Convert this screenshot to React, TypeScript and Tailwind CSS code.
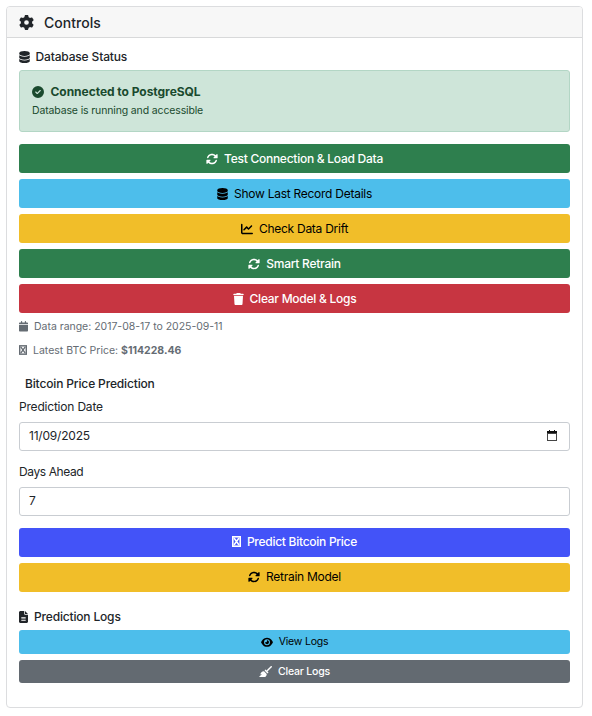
import type { ReactNode } from 'react';
import {
  FaBroom,
  FaCalendar,
  FaChartLine,
  FaCircleCheck,
  FaDatabase,
  FaEye,
  FaFileLines,
  FaGear,
  FaRotate,
  FaTrash,
} from 'react-icons/fa6';

function MissingGlyph({ className }: { className: string }) {
  return (
    <svg viewBox="0 0 9 11" className={className} fill="none" stroke="currentColor">
      <rect x="0.8" y="0.8" width="7.4" height="9.4" strokeWidth="1.6" />
      <path d="M2 2l5 7M7 2L2 9" strokeWidth="1.5" />
    </svg>
  );
}

function ActionButton({ className, children }: { className: string; children: ReactNode }) {
  return (
    <button
      type="button"
      className={`flex w-full shrink-0 items-center justify-center rounded-[3px] ${className}`}
    >
      {children}
    </button>
  );
}

export default function App() {
  return (
    <div className="h-[716px] w-[592px] bg-white pl-1.5 pt-1.5 font-['Inter','Liberation_Sans',sans-serif] text-xs text-[#212529]">
      <section className="h-[702px] w-[577px] overflow-hidden rounded-[4px] border border-[#dcdddf] bg-white">
        <header className="flex h-[31px] items-center border-b border-[#d8d9da] bg-[#f7f7f7] pl-3">
          <FaGear className="size-[15px]" />
          <h1 className="ml-[10px] text-[14px] font-medium leading-[17px] tracking-[0.04px]">Controls</h1>
        </header>

        <div className="flex flex-col px-3 pt-[11px]">
          <h2 className="flex h-[15px] items-center font-medium tracking-[-0.16px]">
            <FaDatabase className="mr-[5.5px] h-3 w-[11px]" />
            Database Status
          </h2>

          <div className="mt-[6px] h-[62px] rounded-[3px] border border-[#b3d6c5] bg-[#cee5d9] px-3 pt-[13px] text-[#1a4a2e]">
            <div className="flex h-4 items-center font-bold tracking-[-0.04px]">
              <FaCircleCheck className="mr-[6.5px] size-3" />
              Connected to PostgreSQL
            </div>
            <p className="mt-[3px] text-[10.5px] leading-4 tracking-[-0.14px]">Database is running and accessible</p>
          </div>

          <div className="mt-3 flex flex-col gap-1.5 tracking-[-0.26px]">
            <ActionButton className="h-[29px] bg-[#2e7f4e] font-medium text-white">
              <FaRotate className="mr-[6px] size-3" />
              Test Connection &amp; Load Data
            </ActionButton>
            <ActionButton className="h-[29px] bg-[#4dbeeb] text-black">
              <FaDatabase className="mr-[6px] h-3 w-[11px]" />
              Show Last Record Details
            </ActionButton>
            <ActionButton className="h-[29px] bg-[#f1be29] text-black">
              <FaChartLine className="mr-[6px] size-3" />
              Check Data Drift
            </ActionButton>
            <ActionButton className="h-[29px] bg-[#2e7f4e] font-medium text-white">
              <FaRotate className="mr-[6px] size-3" />
              Smart Retrain
            </ActionButton>
            <ActionButton className="h-[29px] bg-[#c73541] font-medium text-white">
              <FaTrash className="mr-[6px] h-3 w-[11px]" />
              Clear Model &amp; Logs
            </ActionButton>
          </div>

          <p className="mt-[6px] flex h-[15px] items-center text-[10.5px] tracking-[-0.02px] text-[#656c73]">
            <FaCalendar className="mr-[6px] h-[10.5px] w-[9px]" />
            Data range: 2017-08-17 to 2025-09-11
          </p>
          <p className="mt-[9px] flex h-[15px] items-center text-[10.5px] text-[#656c73]">
            <MissingGlyph className="mb-px mr-[6px] h-[10px] w-2" />
            <span>
              Latest BTC Price: <strong className="font-bold">$114228.46</strong>
            </span>
          </p>

          <h2 className="mt-[18px] h-[15px] pl-[6px] font-medium leading-[15px] tracking-[-0.15px]">
            Bitcoin Price Prediction
          </h2>
          <div className="mt-2 h-[15px] leading-[15px] tracking-[-0.2px]">Prediction Date</div>
          <div className="mt-2 flex h-[29px] items-center justify-between rounded-[3px] border border-[#c9cdd2] pl-[9px] pr-3 pb-0.5">
            <span className="tracking-[-0.2px]">11/09/2025</span>
            <svg viewBox="0 0 10 11" className="h-[11px] w-[10px]" fill="none">
              <path d="M2 0h1v1h4V0h1v1h2v3H0V1h2z" fill="#111111" />
              <rect x="0.5" y="3.5" width="9" height="7" stroke="#444444" />
            </svg>
          </div>
          <div className="mt-[13px] h-[15px] leading-[15px] tracking-[-0.4px]">Days Ahead</div>
          <div className="mt-2 flex h-[29px] items-center rounded-[3px] border border-[#c9cdd2] pb-0.5 pl-[9px]">
            7
          </div>

          <div className="mt-3 flex flex-col gap-1.5 tracking-[-0.27px]">
            <ActionButton className="h-[29px] bg-[#4353f8] pb-0.5 font-medium text-white">
              <MissingGlyph className="mr-[6px] h-[11px] w-[9px]" />
              Predict Bitcoin Price
            </ActionButton>
            <ActionButton className="h-[29px] bg-[#f1be29] pb-0.5 text-black">
              <FaRotate className="mr-[6px] size-3" />
              Retrain Model
            </ActionButton>
          </div>

          <h2 className="mt-[17px] flex h-[15px] items-center font-medium tracking-[-0.17px]">
            <FaFileLines className="mr-[6px] h-3 w-[9px]" />
            Prediction Logs
          </h2>
          <div className="mt-[6px] flex flex-col gap-1.5 tracking-[-0.2px]">
            <ActionButton className="h-[24px] bg-[#4dbeeb] text-[10.5px] text-black">
              <FaEye className="mr-[6px] h-[10.5px] w-3" />
              View Logs
            </ActionButton>
            <ActionButton className="h-[23px] bg-[#636a71] text-[10.5px] font-medium text-white">
              <FaBroom className="mr-[6px] h-[11.5px] w-[13px]" />
              Clear Logs
            </ActionButton>
          </div>
        </div>
      </section>
    </div>
  );
}
